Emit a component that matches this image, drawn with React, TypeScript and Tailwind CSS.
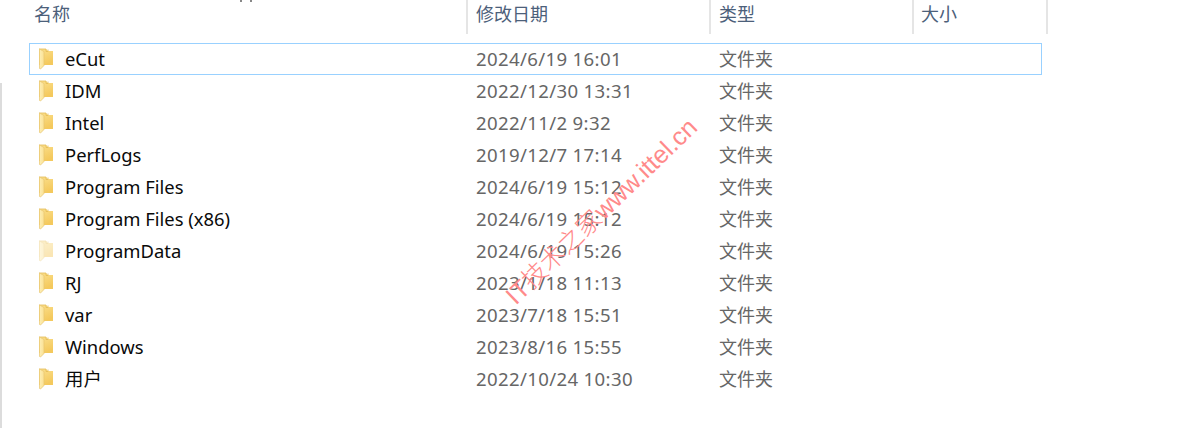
const rows: [string, string, boolean?][] = [
  ["eCut", "2024/6/19 16:01"],
  ["IDM", "2022/12/30 13:31"],
  ["Intel", "2022/11/2 9:32"],
  ["PerfLogs", "2019/12/7 17:14"],
  ["Program Files", "2024/6/19 15:12"],
  ["Program Files (x86)", "2024/6/19 15:12"],
  ["ProgramData", "2024/6/19 15:26", true],
  ["RJ", "2023/1/18 11:13"],
  ["var", "2023/7/18 15:51"],
  ["Windows", "2023/8/16 15:55"],
  ["用户", "2022/10/24 10:30"],
];

function Folder({ faded, id }: { faded?: boolean; id: number }) {
  return (
    <svg width="14" height="22" viewBox="0 0 14 22" className={faded ? "opacity-45" : ""}>
      <defs>
        <linearGradient id={`body${id}`} x1="0" y1="0" x2="0.4" y2="1">
          <stop offset="0" stopColor="#fbe08e" />
          <stop offset="1" stopColor="#f4c95d" />
        </linearGradient>
        <linearGradient id={`flap${id}`} x1="0" y1="0" x2="1" y2="0">
          <stop offset="0" stopColor="#fdeeb5" />
          <stop offset="1" stopColor="#fbe193" />
        </linearGradient>
      </defs>
      <path d="M0 1H7L9 3H14V17H0Z" fill={`url(#body${id})`} />
      <path d="M0 1H7V3.5H9V1.5" fill="none" stroke="#e3bb55" strokeWidth="0.8" />
      <path d="M0.5 1L5 3.5V17.5L1.5 21L0.5 20.5Z" fill={`url(#flap${id})`} stroke="#e8c670" strokeWidth="0.7" />
    </svg>
  );
}

const sans = { fontFamily: '"Noto Sans", "Noto Sans CJK SC", sans-serif' };

export default function App() {
  return (
    <div className="relative h-[428px] w-[1202px] overflow-hidden bg-white" style={sans}>
      <div className="flex h-[34px] w-[1048px] text-[18px] text-[#4c607a]">
        <div className="w-[466px] pl-[34px] leading-[29px]">名称</div>
        <div className="w-[243px] border-l-2 border-[#e5e5e5] pl-[8px] leading-[29px]">修改日期</div>
        <div className="w-[203px] border-l-2 border-[#e5e5e5] pl-[8px] leading-[29px]">类型</div>
        <div className="w-[136px] border-x-2 border-[#e5e5e5] pl-[7px] leading-[29px]">大小</div>
      </div>
      <div className="mt-[9px] w-[1042px] pl-[29px]">
        {rows.map(([name, date, faded], i) => (
          <div
            key={name}
            className={`flex h-[32px] items-center border ${i === 0 ? "border-[#99d1ff]" : "border-transparent"}`}
          >
            <div className="flex w-[446px] items-center">
              <span className="ml-[9px] flex w-[26px]"><Folder faded={faded} id={i} /></span>
              <span className="text-[18.4px] text-[#0a0a0a]">{name}</span>
            </div>
            <div className="w-[243px] text-[18.6px] tracking-[0.35px] text-[#666]">{date}</div>
            <div className="text-[18px] text-[#666]">文件夹</div>
          </div>
        ))}
      </div>
      <div className="pointer-events-none absolute left-0 top-[83px] h-[345px] w-[2px] bg-[#dcdcdc]" />
      <div className="pointer-events-none absolute left-[240px] top-0 h-[2px] w-[2px] bg-[#888]" />
      <div className="pointer-events-none absolute left-[250px] top-0 h-[2px] w-[2px] bg-[#888]" />
      <div
        className="pointer-events-none absolute left-[470px] top-[193px] w-[262px] -rotate-[44deg] whitespace-nowrap text-center text-[25px] leading-[36px] font-light text-[#ff8a8a]"
        style={{ fontFamily: '"Liberation Sans", "Noto Sans CJK SC", sans-serif' }}
      >
        IT技术之家www.ittel.cn
      </div>
    </div>
  );
}
